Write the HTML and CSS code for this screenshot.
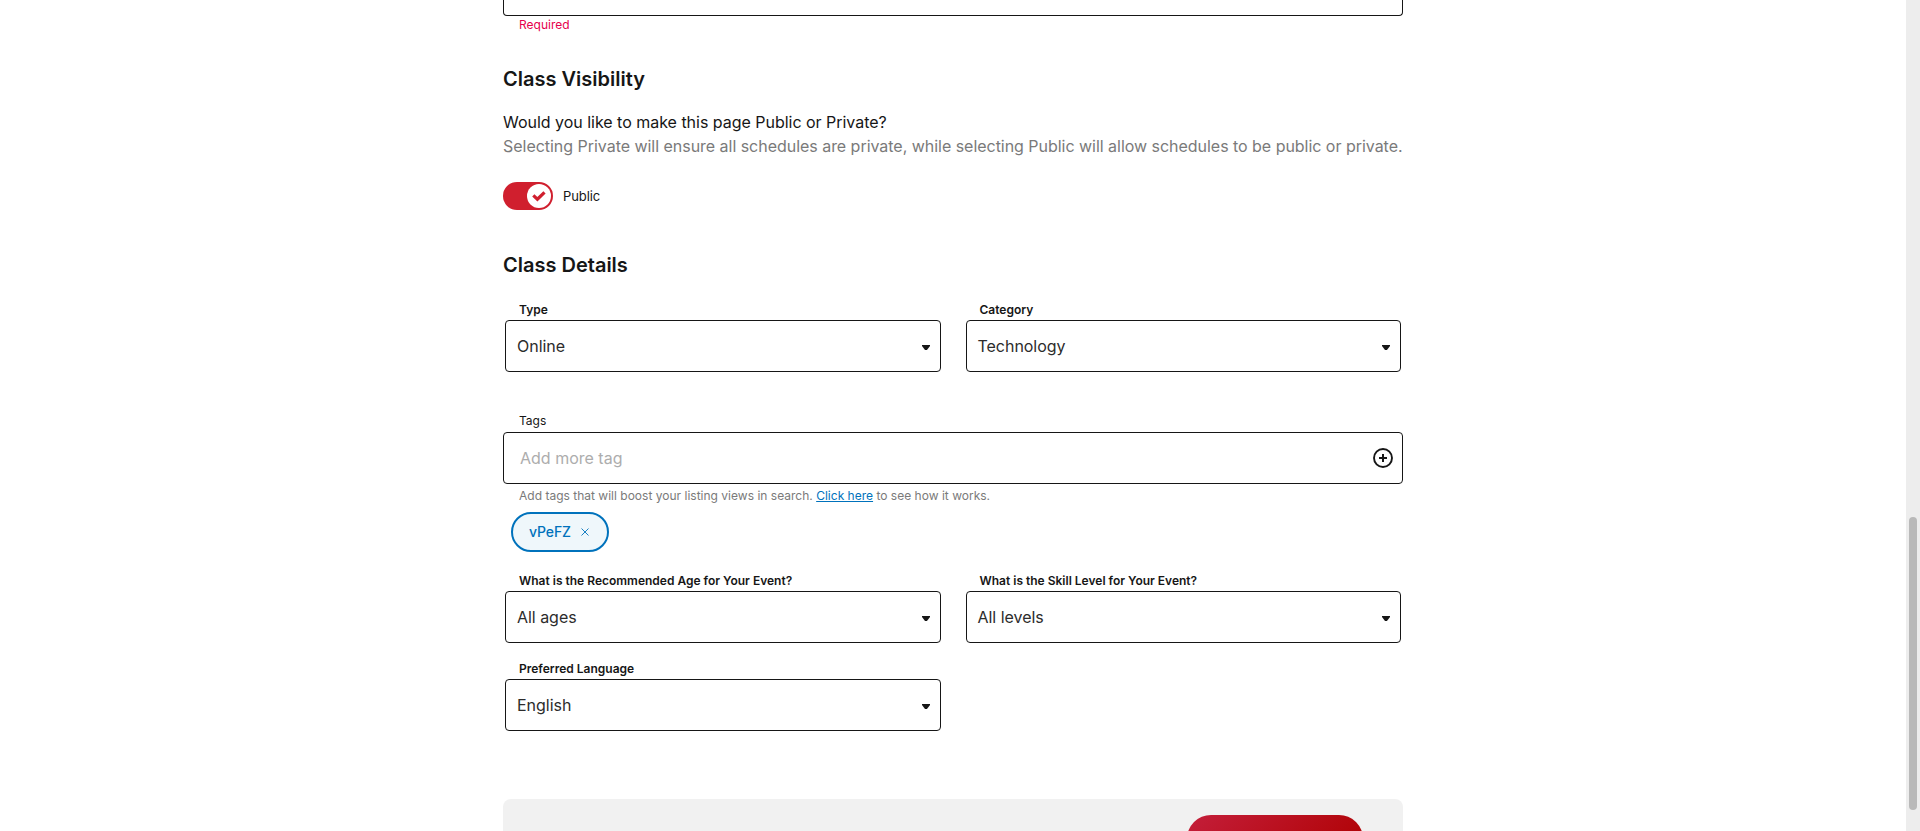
FILE: index.html
```html
<!DOCTYPE html>
<html lang="en">
<head>
<meta charset="utf-8">
<title>Class setup</title>
<link rel="stylesheet" href="styles.css">
</head>
<body>
<main class="form">
  <div class="text-input cut"></div>
  <p class="error">Required</p>

  <h2 class="heading visibility">Class Visibility</h2>
  <p class="question">Would you like to make this page Public or Private?</p>
  <p class="note">Selecting Private will ensure all schedules are private, while selecting Public will allow schedules to be public or private.</p>
  <div class="toggle-row">
    <span class="toggle"><span class="knob"><svg width="14" height="12" viewBox="0 0 14 12"><path d="M1.3 5.4 5.4 9.2 12.5 2.3" fill="none" stroke="#d01f2e" stroke-width="3.2"/></svg></span></span>
    <span class="toggle-label">Public</span>
  </div>

  <h2 class="heading details">Class Details</h2>
  <div class="grid">
    <div class="field"><label class="label">Type</label><div class="select"><span>Online</span><i class="caret"></i></div></div>
    <div class="field"><label class="label">Category</label><div class="select"><span>Technology</span><i class="caret"></i></div></div>
  </div>

  <label class="label tags-label">Tags</label>
  <div class="text-input tags"><span class="placeholder">Add more tag</span>
    <svg width="20" height="20" viewBox="0 0 20 20"><circle cx="10" cy="10" r="9" fill="none" stroke="#161616" stroke-width="1.9"/><path d="M10 6v8M6 10h8" stroke="#161616" stroke-width="2" fill="none"/></svg>
  </div>
  <p class="hint">Add tags that will boost your listing views in search. <a class="link" href="#">Click here</a> to see how it works.</p>
  <div class="chip"><span class="chip-text">vPeFZ</span><svg width="8" height="8" viewBox="0 0 8 8"><path d="M.5.5l7 7M7.5.5l-7 7" stroke="#0072bc" stroke-width=".9"/></svg></div>

  <div class="grid lower">
    <div class="field"><label class="label">What is the Recommended Age for Your Event?</label><div class="select"><span>All ages</span><i class="caret"></i></div></div>
    <div class="field"><label class="label">What is the Skill Level for Your Event?</label><div class="select"><span>All levels</span><i class="caret"></i></div></div>
    <div class="field"><label class="label">Preferred Language</label><div class="select"><span>English</span><i class="caret"></i></div></div>
  </div>

  <div class="footer"><div class="submit"></div></div>
</main>
<aside class="scrollbar"><div class="thumb"></div></aside>
</body>
</html>
```
FILE: styles.css
```css
* { box-sizing: border-box; }
body {
  margin: 0;
  height: 831px;
  overflow: hidden;
  display: flex;
  background: #fff;
  color: #161616;
  font-family: Inter, "Liberation Sans", sans-serif;
}
h2, p { margin: 0; }
svg { display: block; }
.form { width: 900px; height: 831px; margin: 0 auto; }
.text-input { border: 1px solid #161616; border-radius: 4px; }
.cut { height: 16px; border-top: 0; border-radius: 0 0 4px 4px; }
.error { margin-left: 16px; font-size: 12px; line-height: 18px; color: #e6004c; }
.heading { font-size: 20px; line-height: 30px; font-weight: 600; }
.visibility { margin-top: 30px; }
.question { margin-top: 16px; font-size: 16px; line-height: 24px; letter-spacing: -.02px; }
.note { font-size: 16px; line-height: 24px; letter-spacing: -.03px; color: #7a7a7a; white-space: nowrap; }
.toggle-row { margin-top: 24px; display: flex; align-items: center; gap: 10px; }
.toggle { width: 50px; height: 28px; padding: 2px; border-radius: 14px; background: #d01f2e; display: flex; justify-content: flex-end; }
.knob { width: 24px; height: 24px; border-radius: 50%; background: #fff; display: flex; align-items: center; justify-content: center; }
.toggle-label { font-size: 13px; line-height: 18px; letter-spacing: -.1px; }
.details { margin-top: 40px; }
.grid { margin: 20px 2px 0; display: grid; grid-template-columns: 436px 435px; column-gap: 25px; row-gap: 16px; }
.field { display: flex; flex-direction: column; }
.label { display: block; padding-left: 14px; font-size: 12px; line-height: 20px; font-weight: 600; }
.field:nth-child(2) .label { padding-left: 13.5px; }
.select { height: 52px; padding: 0 10px 0 11px; border: 1px solid #161616; border-radius: 4px; display: flex; align-items: center; justify-content: space-between; font-size: 16px; letter-spacing: -.03px; color: #2c2c2c; }
.field:nth-child(2) .select { padding-left: 10.5px; }
.caret { width: 8px; height: 5px; margin-top: 3px; background: #161616; clip-path: polygon(0 0, 100% 0, 100% 20%, 62% 100%, 38% 100%, 0 20%); }
.tags-label { margin-top: 38px; padding-left: 16px; font-weight: 400; line-height: 22px; }
.tags { height: 52px; padding: 0 9px 0 16px; display: flex; align-items: center; justify-content: space-between; }
.placeholder { font-size: 16px; color: #adadad; }
.hint { margin: 3px 0 0 16px; font-size: 12px; line-height: 18px; letter-spacing: .01px; color: #7a7a7a; }
.link { color: #0072bc; }
.chip { width: 98px; height: 40px; margin: 7px 0 0 8px; padding-left: 16px; border: 2px solid #0072bc; border-radius: 20px; background: #eff7fb; display: flex; align-items: center; gap: 10px; font-size: 14px; font-weight: 500; color: #0072bc; }
.chip-text { padding-bottom: 2px; letter-spacing: -.1px; }
.lower { margin-top: 19px; }
.footer { height: 32px; margin-top: 68px; padding: 16px 40px 0; border-radius: 8px 8px 0 0; background: #f1f1f1; display: flex; justify-content: flex-end; }
.submit { width: 176px; height: 48px; border-radius: 24px; background: linear-gradient(135deg, #c41e3a, #ae0000); }
.scrollbar { width: 14px; height: 831px; padding: 517px 3px 0; background: #ededed; }
.thumb { width: 8px; height: 293px; border-radius: 4px; background: #b9b9b9; }
```
